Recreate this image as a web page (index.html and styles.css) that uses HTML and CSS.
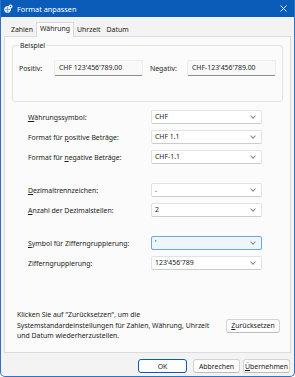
FILE: index.html
```html
<!DOCTYPE html>
<html lang="de">
<head>
    <meta charset="UTF-8">
    <title>Format anpassen</title>
    <link rel="stylesheet" href="styles.css">
</head>
<body>
    <div class="window">
        <!-- Titelleiste -->
        <div class="titlebar">
            <svg class="app-icon" width="9" height="9" viewBox="0 0 9 9">
                <circle cx="3.5" cy="5.5" r="3" fill="#cfe6fb" stroke="#ffffff" stroke-width="0.8"/>
                <path d="M1 5.5h5M3.5 2.5v6" stroke="#4a8fd8" stroke-width="0.6"/>
                <circle cx="6.5" cy="2.5" r="2" fill="#ffffff"/>
                <circle cx="6.5" cy="2.5" r="0.8" fill="#0a5cb8"/>
            </svg>
            <span class="title">Format anpassen</span>
            <svg class="close" width="7" height="7" viewBox="0 0 7 7">
                <path d="M0.5 0.5L6.5 6.5M6.5 0.5L0.5 6.5" stroke="#ffffff" stroke-width="0.9"/>
            </svg>
        </div>

        <div class="content">
            <!-- Registerkarten -->
            <div class="tabs">
                <span class="tab">Zahlen</span>
                <span class="tab active">Währung</span>
                <span class="tab">Uhrzeit</span>
                <span class="tab">Datum</span>
            </div>

            <div class="panel">
                <fieldset class="sample">
                    <legend>Beispiel</legend>
                    <div class="sample-row">
                        <span class="sample-label">Positiv:</span>
                        <span class="sample-field">CHF 123'456'789.00</span>
                        <span class="sample-label neg">Negativ:</span>
                        <span class="sample-field">CHF-123'456'789.00</span>
                    </div>
                </fieldset>

                <div class="group first">
                    <div class="row">
                        <span class="label"><u>W</u>ährungssymbol:</span>
                        <span class="combo">CHF</span>
                    </div>
                    <div class="row">
                        <span class="label">Format für <u>p</u>ositive Beträge:</span>
                        <span class="combo">CHF 1.1</span>
                    </div>
                    <div class="row">
                        <span class="label">Format für <u>n</u>egative Beträge:</span>
                        <span class="combo">CHF-1.1</span>
                    </div>
                </div>

                <div class="group">
                    <div class="row">
                        <span class="label"><u>D</u>ezimaltrennzeichen:</span>
                        <span class="combo">.</span>
                    </div>
                    <div class="row">
                        <span class="label"><u>A</u>nzahl der Dezimalstellen:</span>
                        <span class="combo">2</span>
                    </div>
                </div>

                <div class="group">
                    <div class="row">
                        <span class="label"><u>S</u>ymbol für Zifferngruppierung:</span>
                        <span class="combo focus">'</span>
                    </div>
                    <div class="row">
                        <span class="label">Zifferngruppierung:</span>
                        <span class="combo">123'456'789</span>
                    </div>
                </div>

                <div class="reset">
                    <p>Klicken Sie auf "Zurücksetzen", um die Systemstandardeinstellungen für Zahlen, Währung, Uhrzeit und Datum wiederherzustellen.</p>
                    <button class="btn reset-btn"><u>Z</u>urücksetzen</button>
                </div>
            </div>

            <div class="actions">
                <button class="btn default">OK</button>
                <button class="btn">Abbrechen</button>
                <button class="btn"><u>Ü</u>bernehmen</button>
            </div>
        </div>
    </div>
</body>
</html>
```

FILE: styles.css
```css
body {
    margin: 0;
    padding: 0;
    background: #ffffff;
    font-family: "Noto Sans", "Open Sans", sans-serif;
    font-size: 6.9px;
    color: #1b1b1b;
}
u {
    text-decoration-thickness: 0.6px;
    text-underline-offset: 1px;
}
.window {
    width: 295px;
    height: 377px;
    box-sizing: border-box;
    border: 1px solid #2b74c9;
    border-top: none;
    border-radius: 0 0 5px 5px;
    background: #f3f3f3;
    overflow: hidden;
}
.titlebar {
    height: 17px;
    background: #0a5cb8;
    color: white;
    display: flex;
    align-items: center;
    padding: 0 8px 0 4px;
    margin: 0 -1px;
}
.app-icon {
    margin-right: 4px;
}
.title {
    flex: 1;
    font-size: 7.3px;
}
.content {
    padding: 0 3px;
}
.tabs {
    display: flex;
    height: 19px;
    align-items: flex-end;
    padding-left: 4px;
}
.tab {
    padding: 0 3px;
    height: 12px;
    line-height: 12px;
}
.tab.active {
    height: 14px;
    line-height: 12px;
    background: #fbfbfb;
    border: 1px solid #d9d9d9;
    border-bottom: none;
    margin-bottom: -1px;
    position: relative;
}
.panel {
    height: 317px;
    box-sizing: border-box;
    background: #fbfbfb;
    border: 1px solid #dcdcdc;
    padding: 4px 7px 0 7px;
}
.sample {
    margin: 0;
    height: 61px;
    box-sizing: border-box;
    border: 1px solid #e2e2e2;
    border-radius: 3px;
    padding: 6px 6px 0 6px;
}
.sample legend {
    padding: 0 1px;
    margin-left: 0;
}
.sample-row {
    display: flex;
    align-items: center;
    margin-top: 4px;
}
.sample-label {
    width: 35px;
}
.sample-label.neg {
    width: 37px;
    margin-left: 7px;
}
.sample-field {
    width: 89px;
    height: 16px;
    box-sizing: border-box;
    line-height: 14px;
    padding-left: 4px;
    background: #f9f9f9;
    border: 1px solid #ececec;
    border-bottom: 1px solid #8a8a8a;
    border-radius: 2px;
}
.group {
    margin-top: 19px;
    padding-left: 16px;
    display: flex;
    flex-direction: column;
    gap: 6px;
}
.group.first {
    margin-top: 8px;
}
.row {
    display: flex;
    align-items: center;
    height: 14px;
}
.label {
    width: 123px;
}
.combo {
    width: 111px;
    height: 14px;
    box-sizing: border-box;
    line-height: 12px;
    padding-left: 3px;
    background: #ffffff;
    border: 1px solid #e3e3e3;
    border-bottom-color: #cccccc;
    border-radius: 2px;
    position: relative;
}
.combo::after {
    content: "";
    position: absolute;
    right: 6px;
    top: 3px;
    width: 3px;
    height: 3px;
    border-right: 0.8px solid #8a8a8a;
    border-bottom: 0.8px solid #8a8a8a;
    transform: rotate(45deg);
}
.combo.focus {
    background: #eef6fd;
    border-color: #6aa8e0;
}
.reset {
    display: flex;
    align-items: center;
    margin-top: 40px;
    padding-left: 5px;
}
.reset p {
    margin: 0;
    width: 202px;
    line-height: 10.5px;
}
.btn {
    font-family: inherit;
    font-size: 6.9px;
    color: #1b1b1b;
    background: #fdfdfd;
    border: 1px solid #d3d3d3;
    border-bottom-color: #bdbdbd;
    border-radius: 3px;
    height: 14px;
    padding: 0;
}
.reset-btn {
    width: 54px;
    margin-left: auto;
    margin-right: 3px;
}
.actions {
    display: flex;
    justify-content: flex-end;
    gap: 3px;
    padding-top: 6px;
    padding-right: 1px;
}
.actions .btn {
    width: 47px;
}
.actions .btn.default {
    border: 1px solid #0a5cb8;
    width: 49px;
    margin-right: 3px;
}
```
